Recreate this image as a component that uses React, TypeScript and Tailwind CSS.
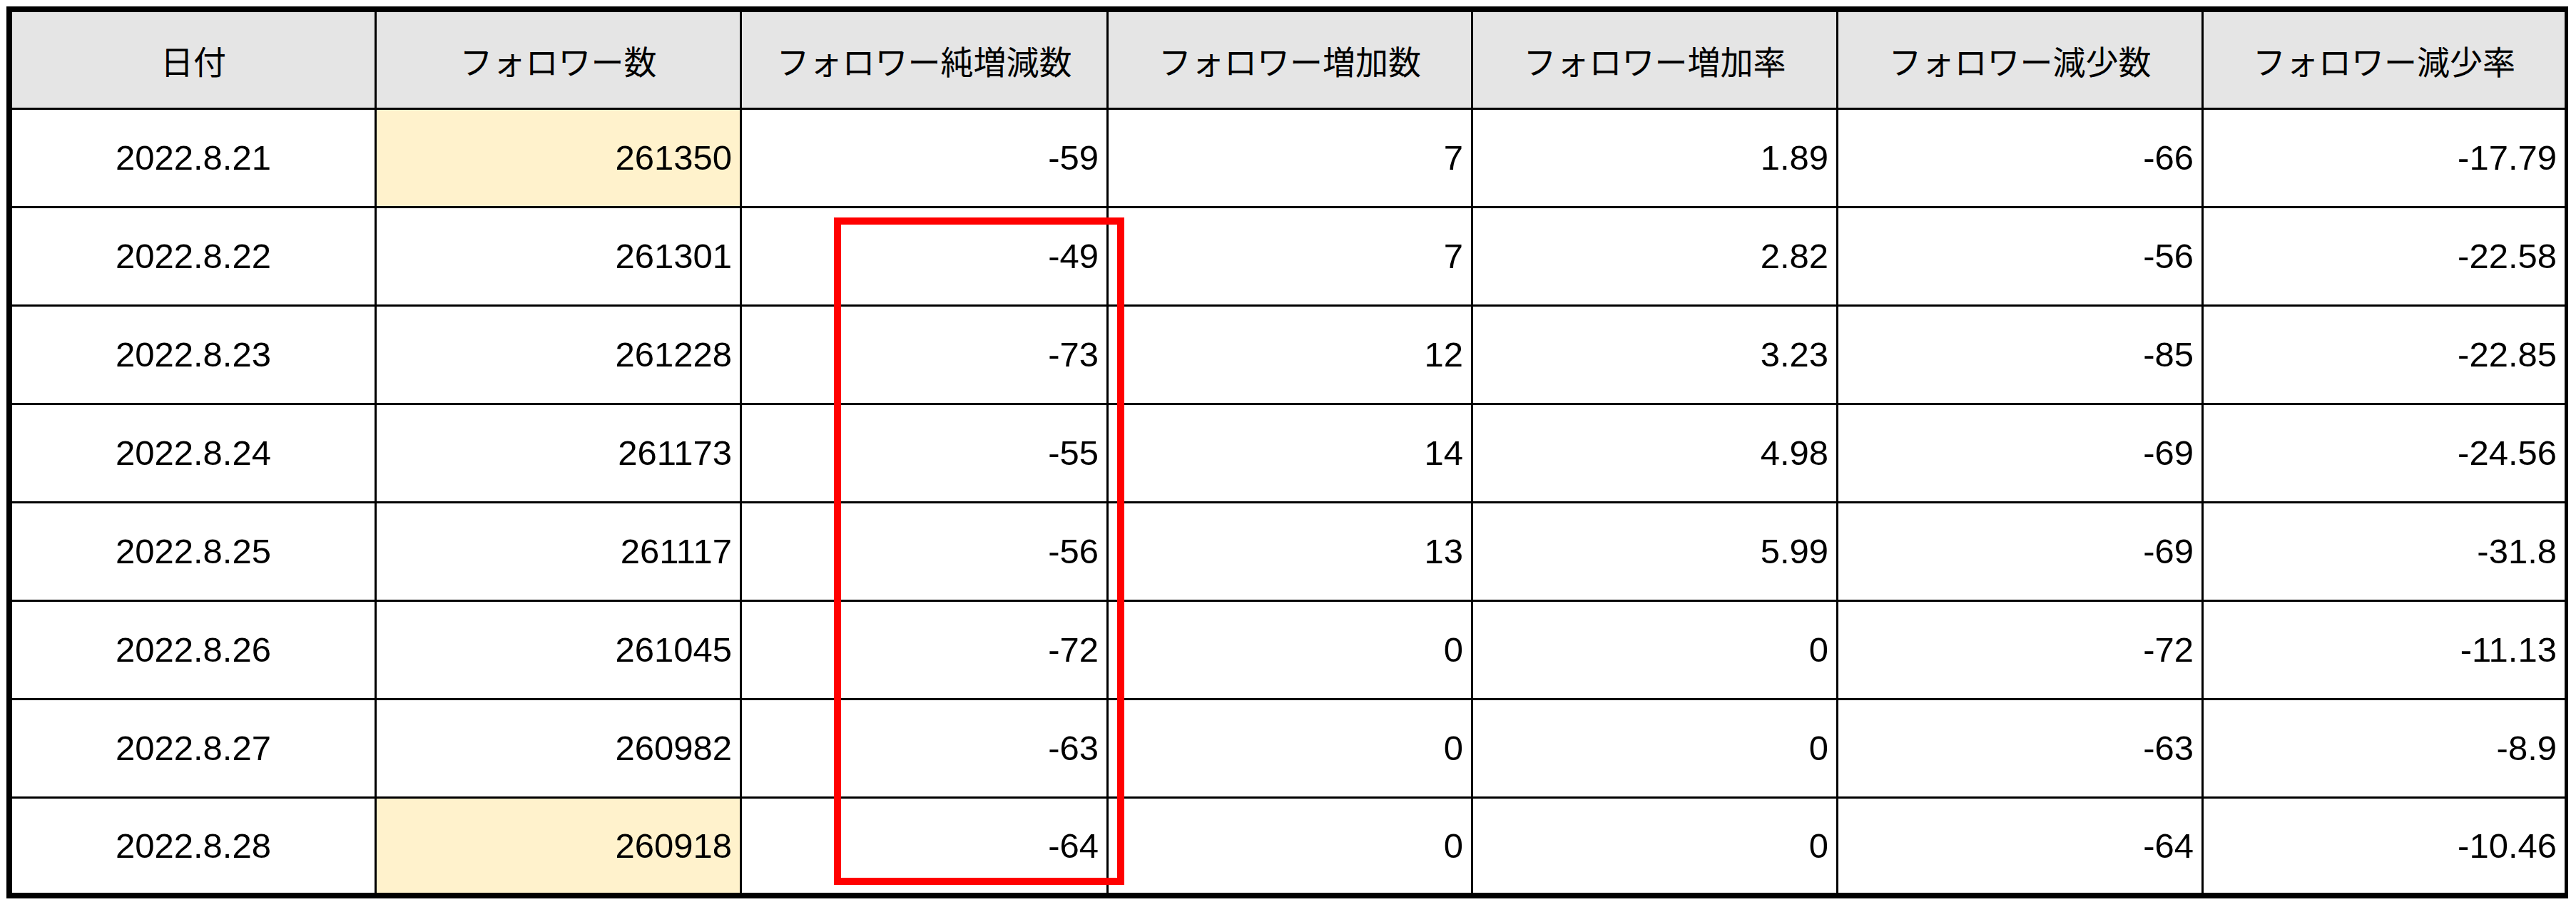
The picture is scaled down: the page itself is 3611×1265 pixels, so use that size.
const headers = [
  '日付',
  'フォロワー数',
  'フォロワー純増減数',
  'フォロワー増加数',
  'フォロワー増加率',
  'フォロワー減少数',
  'フォロワー減少率',
];

const rows: (string | number)[][] = [
  ['2022.8.21', 261350, -59, 7, 1.89, -66, -17.79],
  ['2022.8.22', 261301, -49, 7, 2.82, -56, -22.58],
  ['2022.8.23', 261228, -73, 12, 3.23, -85, -22.85],
  ['2022.8.24', 261173, -55, 14, 4.98, -69, -24.56],
  ['2022.8.25', 261117, -56, 13, 5.99, -69, -31.8],
  ['2022.8.26', 261045, -72, 0, 0, -72, -11.13],
  ['2022.8.27', 260982, -63, 0, 0, -63, -8.9],
  ['2022.8.28', 260918, -64, 0, 0, -64, -10.46],
];

// first and last day are highlighted in the follower column
const highlighted = new Set([0, rows.length - 1]);

export default function App() {
  return (
    <div className="relative w-[3611px] h-[1265px] bg-white pl-[9px] pt-[9px] text-black font-['Noto_Sans_CJK_JP',sans-serif]">
      <div className="inline-grid grid-cols-[508px_509px_511px_508px_509px_509px_506px] grid-rows-[134px_repeat(7,135px)_132px] gap-[3px] bg-black border-[8px] border-r-[5px] border-black">
        {headers.map((h) => (
          <div key={h} className="flex items-center justify-center bg-[#e5e5e5] text-[46px] leading-none">
            {h}
          </div>
        ))}
        {rows.map((row, r) =>
          row.map((cell, c) => (
            <div
              key={`${r}-${c}`}
              className={
                c === 0
                  ? "flex items-center justify-center bg-white font-['Liberation_Sans',sans-serif] text-[49px] leading-none"
                  : c === 1 && highlighted.has(r)
                    ? "flex items-center justify-end pr-[11px] bg-[#fff2cc] font-['Liberation_Sans',sans-serif] text-[49px] leading-none"
                    : "flex items-center justify-end pr-[11px] bg-white font-['Liberation_Sans',sans-serif] text-[49px] leading-none"
              }
            >
              {cell}
            </div>
          )),
        )}
      </div>
      <div className="absolute left-[1169px] top-[305px] w-[407px] h-[936px] border-[10px] border-[#ff0000]" />
    </div>
  );
}
